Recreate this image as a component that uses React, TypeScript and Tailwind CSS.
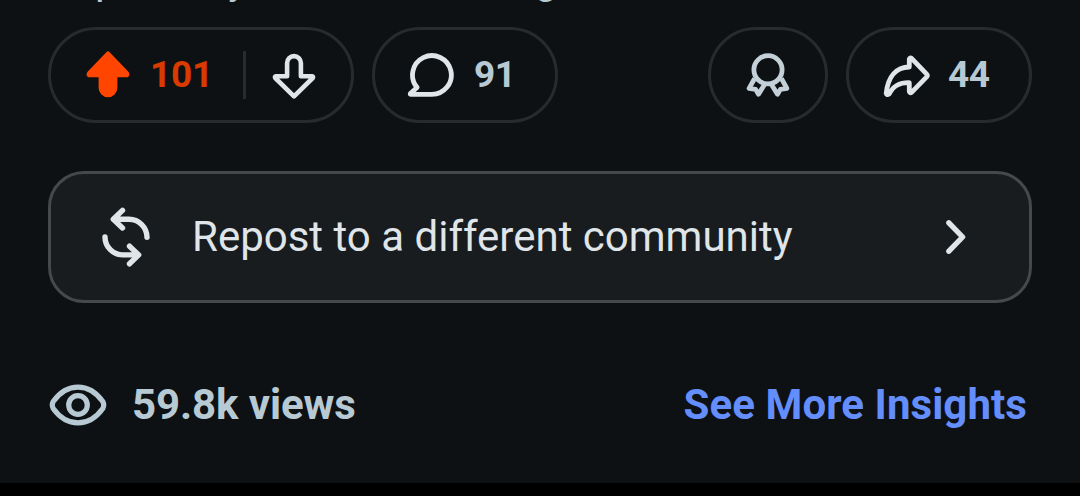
import type { ReactNode } from "react";

function Pill({ className, children }: { className: string; children: ReactNode }) {
  return (
    <div className={`flex h-24 items-center rounded-full border-[3px] border-[#292a2c] ${className}`}>
      {children}
    </div>
  );
}

function UpvoteIcon() {
  return (
    <svg className="h-12 w-12 shrink-0" viewBox="0 0 48 48" fill="#ff4500">
      <path d="M22.6 1Q24 -.4 25.4 1L44.2 20.4C46.6 23.4 45.2 26.3 42.4 26.3H33.4V36.8A9.4 9.4 0 0 1 14.6 36.8V26.3H5.6C2.8 26.3 1.4 23.4 3.8 20.4Z" />
    </svg>
  );
}

function DownvoteIcon() {
  return (
    <svg className="h-12 w-12 shrink-0" viewBox="0 0 48 48" fill="none" stroke="#dfe5e8" strokeWidth="4.6" strokeLinejoin="round">
      <path d="M17.1 25.3V12A6.9 6.9 0 0 1 30.9 12V25.3H42.2Q43.6 25.5 42.7 27L24 45.3L5.3 27Q4.4 25.5 5.8 25.3Z" />
    </svg>
  );
}

function CommentIcon() {
  return (
    <svg className="h-12 w-12 shrink-0" viewBox="0 0 48 48" fill="none" stroke="#dfe5e8" strokeWidth="4.8" strokeLinejoin="round">
      <path d="M24.8 43.4A19.4 19.4 0 1 0 10 36.4L3.4 42.6Q3 43.4 4 43.4Z" />
    </svg>
  );
}

function AwardIcon() {
  return (
    <svg className="h-12 w-12 shrink-0" viewBox="0 0 48 48" fill="none" stroke="#c3d0d8" strokeWidth="4.8" strokeLinejoin="round">
      <circle cx="24" cy="18.8" r="14.1" />
      <path d="M10.6 27.5L5.1 37.4L11.6 38.4L14.5 43.3L21 32.8" />
      <path d="M37.4 27.5L42.9 37.4L36.4 38.4L33.5 43.3L27 32.8" />
    </svg>
  );
}

function ShareIcon() {
  return (
    <svg className="h-12 w-12 shrink-0" viewBox="0 0 48 48" fill="none" stroke="#dfe5e8" strokeWidth="4.8" strokeLinejoin="round">
      <path d="M26.3 16V8.2Q26.9 6 28.6 7.4L43.7 23.2Q44.9 24.5 43.7 25.8L28.6 41.3Q26.9 42.6 26.3 40.6V31.7C16.4 31.5 10.4 34.4 6.2 43Q3.6 44.6 3.2 42.4C4.9 25.5 13.4 16.2 26.3 16Z" />
    </svg>
  );
}

function RepostIcon() {
  return (
    <svg className="h-[60px] w-12 shrink-0" viewBox="0 0 48 60" fill="none" stroke="#dfe5e8" strokeWidth="5.4" strokeLinecap="round" strokeLinejoin="round">
      <path d="M20.5 3.4L11.3 12.3L20.5 21M12 12.3H27A18 18 0 0 1 45 30.3" />
      <path d="M27.5 39.2L36.7 47.9L27.5 56.8M36 47.9H21A18 18 0 0 1 3 29.9" />
    </svg>
  );
}

function ChevronIcon() {
  return (
    <svg className="h-9 w-5 shrink-0" viewBox="0 0 20 36" fill="none" stroke="#dfe5e8" strokeWidth="5.4" strokeLinecap="round" strokeLinejoin="round">
      <path d="M2.9 3.8L16.6 18L2.9 32.2" />
    </svg>
  );
}

function EyeIcon() {
  return (
    <svg className="h-[42px] w-[58px] shrink-0" viewBox="0 0 58 42" fill="none" stroke="#b7cad4" strokeWidth="5.2">
      <path d="M4.2 17.5C18 -1.7 40 -1.7 53.8 17.5Q55.6 21 53.8 24.5C40 43.7 18 43.7 4.2 24.5Q2.4 21 4.2 17.5Z" />
      <circle cx="29" cy="21" r="9.3" />
    </svg>
  );
}

export default function App() {
  return (
    <main className="flex h-[496px] w-[1080px] flex-col overflow-hidden bg-black font-[Roboto,sans-serif]">
      <div className="flex h-[483px] flex-col bg-[#0e1113] px-12">
        <div className="flex h-[27px] shrink-0 items-start text-[42px] leading-[42px] text-[#b7cad4]">
          <span className="-mt-[42px] ml-[47px] w-[133px]">p</span>
          <span className="-mt-[42px] w-[306px]">y</span>
          <span className="-mt-[42px]">g</span>
        </div>

        <div className="flex shrink-0 items-center text-[37px] font-bold leading-none">
          <Pill className="w-[306px] pl-[33px]">
            <UpvoteIcon />
            <span className="mb-0.5 ml-[18px] w-[61px] tracking-[-0.2px] text-[#d93a00]">101</span>
            <span className="ml-8 h-12 w-[3px] bg-[#292a2c]" />
            <span className="ml-6"><DownvoteIcon /></span>
          </Pill>
          <Pill className="ml-[18px] w-[186px] pl-8">
            <CommentIcon />
            <span className="mb-0.5 ml-[19px] tracking-[-0.5px] text-[#b7cad4]">91</span>
          </Pill>
          <Pill className="ml-auto w-[120px] justify-center"><AwardIcon /></Pill>
          <Pill className="ml-[18px] w-[186px] pl-[34px]">
            <ShareIcon />
            <span className="mb-0.5 ml-[17px] tracking-[-0.5px] text-[#b7cad4]">44</span>
          </Pill>
        </div>

        <div className="mt-12 flex h-[132px] shrink-0 items-center rounded-[36px] border-[3px] border-[#45494b] bg-[#191c1f] pl-[51px] pr-[63px]">
          <RepostIcon />
          <span className="ml-[42px] whitespace-nowrap text-[42px] leading-none text-[#dfe5e8]">Repost to a different community</span>
          <span className="ml-auto"><ChevronIcon /></span>
        </div>

        <div className="mt-[81px] flex h-[42px] shrink-0 items-center whitespace-nowrap text-[42px] font-bold leading-none">
          <span className="ml-px"><EyeIcon /></span>
          <span className="ml-[25px] tracking-[-0.1px] text-[#b7cad4]">59.8k views</span>
          <span className="ml-auto mr-[5px] tracking-[0.08px] text-[#648efc]">See More Insights</span>
        </div>
      </div>
    </main>
  );
}
